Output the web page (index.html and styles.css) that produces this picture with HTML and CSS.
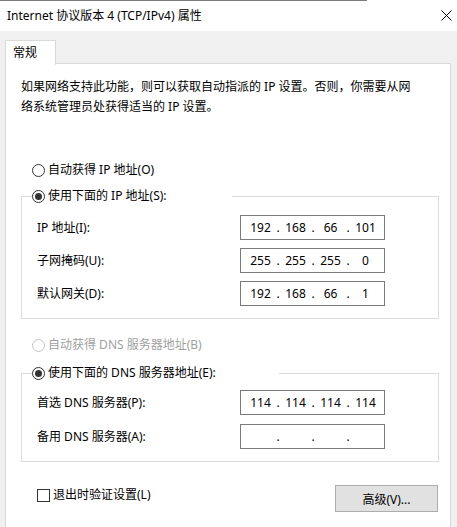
FILE: index.html
```html
<!DOCTYPE html>
<html lang="zh-CN">
<head>
<meta charset="utf-8">
<title>Internet 协议版本 4 (TCP/IPv4) 属性</title>
<link rel="stylesheet" href="styles.css">
</head>
<body>
<div class="window">
  <div class="titlebar">
    <span class="title">Internet 协议版本 4 (TCP/IPv4) 属性</span>
    <svg class="close" width="11" height="11" viewBox="0 0 11 11"><path d="M0.5 0.5 L10.5 10.5 M10.5 0.5 L0.5 10.5" stroke="#000" stroke-width="1" fill="none"/></svg>
  </div>
  <div class="tabs"><div class="tab">常规</div></div>
  <div class="panel">
    <p class="desc">如果网络支持此功能，则可以获取自动指派的 IP 设置。否则，你需要从网络系统管理员处获得适当的 IP 设置。</p>

    <div class="option opt-auto-ip"><span class="radio"></span>自动获得 IP 地址(O)</div>
    <fieldset class="group group-ip">
      <legend class="legend legend-ip"><span class="option"><span class="radio checked"></span>使用下面的 IP 地址(S):</span></legend>
      <div class="fields fields-ip">
        <div class="field"><span class="label">IP 地址(I):</span>
          <div class="ipbox"><span class="oct">192</span><span class="dot">.</span><span class="oct">168</span><span class="dot">.</span><span class="oct">66</span><span class="dot">.</span><span class="oct">101</span></div></div>
        <div class="field"><span class="label">子网掩码(U):</span>
          <div class="ipbox"><span class="oct">255</span><span class="dot">.</span><span class="oct">255</span><span class="dot">.</span><span class="oct">255</span><span class="dot">.</span><span class="oct">0</span></div></div>
        <div class="field"><span class="label">默认网关(D):</span>
          <div class="ipbox"><span class="oct">192</span><span class="dot">.</span><span class="oct">168</span><span class="dot">.</span><span class="oct">66</span><span class="dot">.</span><span class="oct">1</span></div></div>
      </div>
    </fieldset>

    <div class="option opt-auto-dns disabled"><span class="radio"></span>自动获得 DNS 服务器地址(B)</div>
    <fieldset class="group group-dns">
      <legend class="legend legend-dns"><span class="option"><span class="radio checked"></span>使用下面的 DNS 服务器地址(E):</span></legend>
      <div class="fields fields-dns">
        <div class="field"><span class="label">首选 DNS 服务器(P):</span>
          <div class="ipbox"><span class="oct">114</span><span class="dot">.</span><span class="oct">114</span><span class="dot">.</span><span class="oct">114</span><span class="dot">.</span><span class="oct">114</span></div></div>
        <div class="field"><span class="label">备用 DNS 服务器(A):</span>
          <div class="ipbox"><span class="oct"></span><span class="dot">.</span><span class="oct"></span><span class="dot">.</span><span class="oct"></span><span class="dot">.</span><span class="oct"></span></div></div>
      </div>
    </fieldset>

    <div class="footer">
      <label class="check"><span class="checkbox"></span>退出时验证设置(L)</label>
      <button class="btn" type="button">高级(V)...</button>
    </div>
  </div>
</div>
</body>
</html>
```

FILE: styles.css
```css
* { box-sizing: border-box; }
html, body {
  margin: 0;
  padding: 0;
}
body {
  width: 457px;
  height: 527px;
  overflow: hidden;
  background: #f0f0f0;
  font-family: "Noto Sans", "Noto Sans CJK SC", sans-serif;
  font-size: 12px;
  color: #000;
}
.window {
  width: 457px;
  height: 527px;
  display: flex;
  flex-direction: column;
}
.titlebar {
  height: 31px;
  flex: none;
  display: flex;
  align-items: center;
  justify-content: space-between;
  padding: 0 5px 0 7px;
  background: linear-gradient(#7a7a7a, #7a7a7a) no-repeat 0 0 / 367px 1px, #fff;
}
.title { line-height: 20px; }
.close { display: block; }
.tabs {
  height: 33px;
  flex: none;
  padding: 9px 0 0 5px;
}
.tab {
  width: 51px;
  height: 25px;
  background: #fff;
  border: 1px solid #d9d9d9;
  border-bottom: none;
  padding-left: 7px;
  line-height: 23px;
  position: relative;
  z-index: 1;
}
.panel {
  flex: 1;
  margin: -1px 6px 0 5px;
  background: #fff;
  border: 1px solid #d9d9d9;
  border-bottom: none;
  padding: 13px 0 0 15px;
}
.desc {
  margin: 0;
  width: 396px;
  line-height: 20px;
}
.option {
  display: flex;
  align-items: center;
  line-height: 20px;
  white-space: nowrap;
}
.opt-auto-ip { margin-top: 43px; padding-left: 11px; }
.opt-auto-dns { margin-top: 16px; padding-left: 11px; }
.disabled { color: #a0a0a0; }
.radio {
  width: 13px;
  height: 13px;
  border: 1px solid #333;
  border-radius: 50%;
  background: #fff;
  margin-right: 3px;
  display: flex;
  align-items: center;
  justify-content: center;
  flex: none;
}
.disabled .radio { border-color: #c4c4c4; }
.radio.checked::after {
  content: "";
  width: 7px;
  height: 7px;
  border-radius: 50%;
  background: #333;
}
.group {
  margin: 0;
  padding: 0;
  width: 418px;
  min-width: 0;
  border: 1px solid #dcdcdc;
}
.group-ip { margin-top: 6px; }
.group-dns { margin-top: 8px; }
.legend {
  padding: 0;
  margin-left: 10px;
}
.legend-ip { width: 200px; }
.legend-dns { width: 247px; }
.fields {
  display: flex;
  flex-direction: column;
  padding: 0 0 12px 15px;
}
.fields-ip { padding-top: 9px; gap: 8px; }
.fields-dns { padding-top: 7px; gap: 9px; }
.field {
  display: flex;
  align-items: center;
  height: 25px;
}
.label {
  width: 203px;
  flex: none;
  line-height: 20px;
}
.ipbox {
  width: 145px;
  height: 25px;
  border: 1px solid #7a7a7a;
  display: flex;
  align-items: center;
  padding-left: 6px;
  line-height: 20px;
}
.oct {
  width: 27px;
  text-align: center;
  flex: none;
}
.dot {
  width: 8px;
  text-align: center;
  flex: none;
}
.footer {
  width: 418px;
  margin-top: 23px;
  display: flex;
  justify-content: space-between;
  align-items: flex-start;
  padding: 0 1px 0 16px;
}
.check {
  display: flex;
  align-items: center;
  line-height: 20px;
  margin-top: 0;
}
.checkbox {
  width: 13px;
  height: 13px;
  border: 1px solid #333;
  background: #fff;
  margin-right: 3px;
  flex: none;
}
.btn {
  width: 103px;
  height: 27px;
  background: #e1e1e1;
  border: 1px solid #adadad;
  border-radius: 0;
  font: inherit;
  color: #000;
  padding: 0;
}
```
